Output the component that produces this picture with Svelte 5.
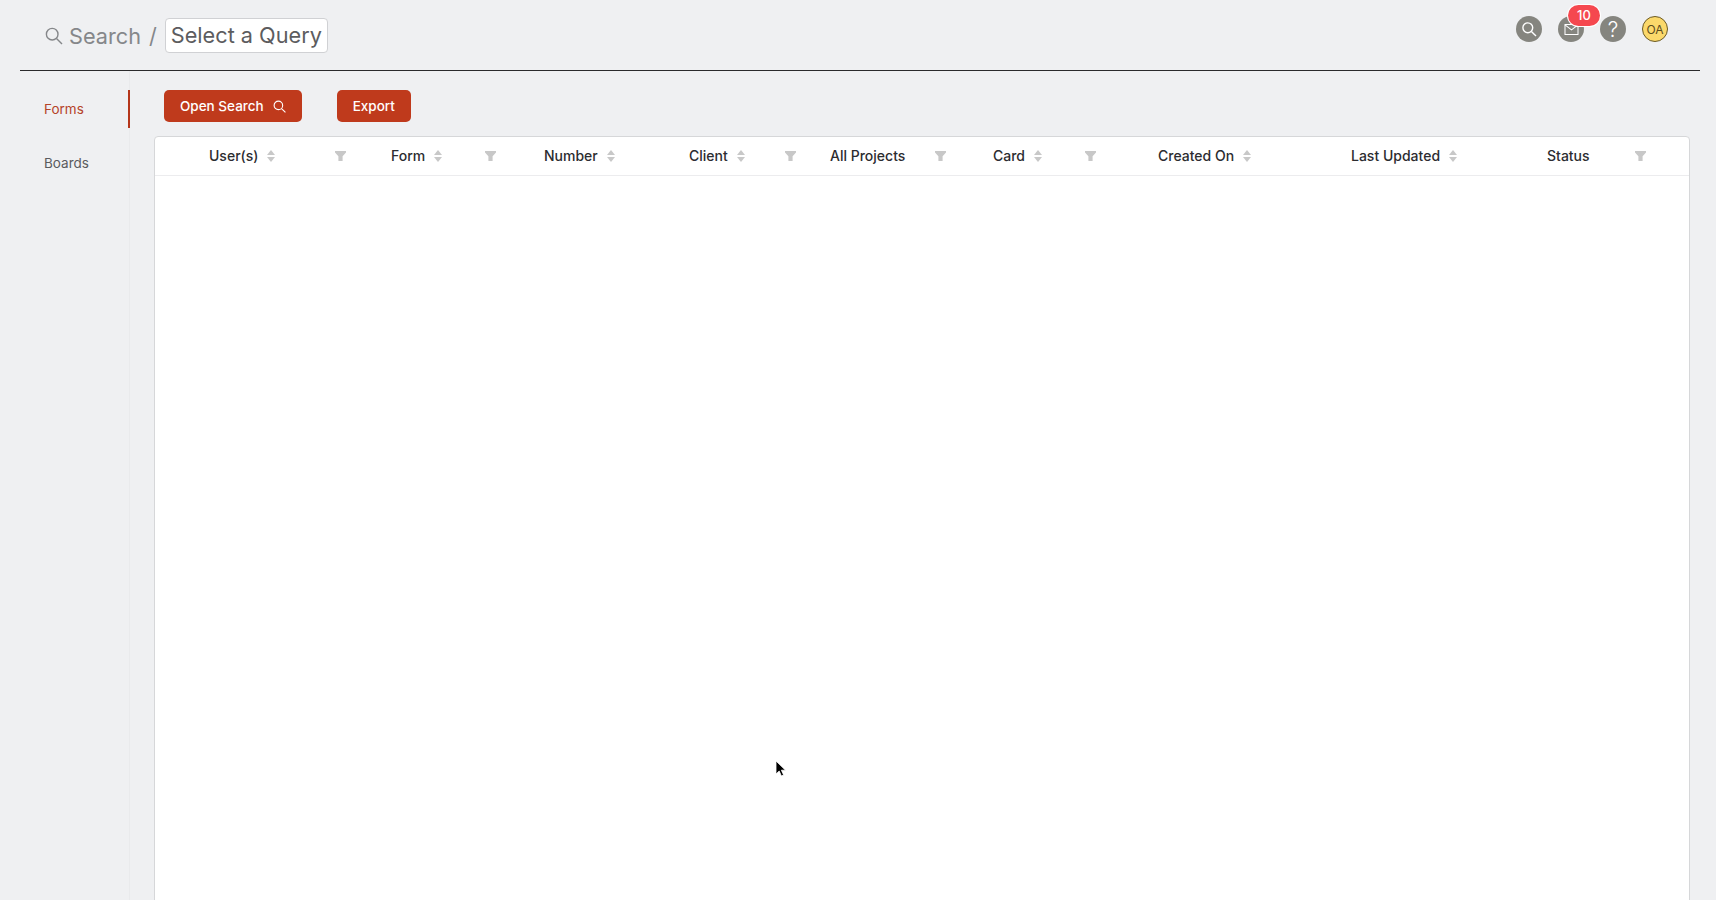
<script lang="ts">
	// width = cell ends at filter icon's right edge, pad = where the title starts
	const columns = [
		{ name: 'User(s)', width: 191, pad: 54, sort: true, filter: true },
		{ name: 'Form', width: 150, pad: 45, sort: true, filter: true },
		{ name: 'Number', width: 176, pad: 48, sort: true, filter: false },
		{ name: 'Client', width: 124, pad: 17, sort: true, filter: true },
		{ name: 'All Projects', width: 150, pad: 34, sort: false, filter: true },
		{ name: 'Card', width: 150, pad: 47, sort: true, filter: true },
		{ name: 'Created On', width: 224, pad: 62, sort: true, filter: false },
		{ name: 'Last Updated', width: 180, pad: 31, sort: true, filter: false },
		{ name: 'Status', width: 146, pad: 47, sort: false, filter: true }
	];
</script>

<div class="page">
	<header class="topbar">
		<div class="crumbs">
			<svg class="crumb-icon" viewBox="0 0 18 18" width="18" height="18" fill="none" stroke="#85878a" stroke-width="1.4">
				<circle cx="7.2" cy="7.2" r="5.8" />
				<path d="M11.5 11.5L17 17" />
			</svg>
			<span class="crumb">Search</span>
			<span class="slash">/</span>
			<span class="query">Select a Query</span>
		</div>
		<div class="actions">
			<span class="round">
				<svg viewBox="0 0 16 16" width="16" height="16" fill="none" stroke="#fff" stroke-width="1.4">
					<circle cx="6.8" cy="6.8" r="4.9" />
					<path d="M10.4 10.4L15 15" />
				</svg>
			</span>
			<span class="round mail">
				<svg viewBox="0 0 16 14" width="15" height="13" fill="none" stroke="#fff" stroke-width="1.1">
					<path d="M1 1.5h14v11H1z" />
					<path d="M1 2l7 5.5L15 2" />
				</svg>
				<span class="badge">10</span>
			</span>
			<span class="round help">?</span>
			<span class="avatar">OA</span>
		</div>
	</header>

	<div class="body">
		<nav class="side">
			<a class="side-item active" href="#forms">Forms</a>
			<a class="side-item" href="#boards">Boards</a>
		</nav>
		<main class="content">
			<div class="toolbar">
				<button class="btn">
					Open Search
					<svg viewBox="0 0 14 14" width="13" height="13" fill="none" stroke="#fff" stroke-width="1.2">
						<circle cx="5.8" cy="5.8" r="4.6" />
						<path d="M9.2 9.2L13.4 13.4" />
					</svg>
				</button>
				<button class="btn">Export</button>
			</div>
			<section class="card">
				<div class="head">
					{#each columns as col}
						<div class="cell" style="width: {col.width}px; padding-left: {col.pad}px">
							<span class="title">{col.name}</span>
							{#if col.sort}
								<svg class="sort" viewBox="0 0 8 12" width="8" height="12" fill="#c8c8c8">
									<path d="M4 0L8 5H0z" />
									<path d="M4 12L0 7h8z" />
								</svg>
							{/if}
							{#if col.filter}
								<svg class="filter" viewBox="0 0 11 10" width="11" height="10" fill="#c8c8c8">
									<path d="M0 0h11v1.6L7.6 5.2V10H3.4V5.2L0 1.6z" />
								</svg>
							{/if}
						</div>
					{/each}
				</div>
			</section>
		</main>
	</div>

	<svg class="cursor" viewBox="0 0 12 18" width="12" height="18">
		<path d="M1 1v13l3.2-3 2.2 5 2.2-1-2.2-4.8H10.5z" fill="#000" stroke="#fff" stroke-width="0.8" />
	</svg>
</div>

<style>
	:global(body) {
		margin: 0;
		background: #eff0f2;
		font-family: Inter, 'Noto Sans', sans-serif;
	}

	.page {
		position: relative;
		height: 900px;
		overflow: hidden;
		background: #eff0f2;
	}

	.topbar {
		display: flex;
		justify-content: space-between;
		height: 70px;
		margin: 0 16px 0 20px;
		border-bottom: 1px solid #2a2a2c;
	}

	.crumbs {
		display: flex;
		align-items: center;
		height: 71px;
		padding-left: 25px;
	}

	.crumb-icon {
		margin-right: 6px;
	}

	.crumb {
		font-size: 21.7px;
		color: #85878a;
	}

	.slash {
		margin: 0 8px 0 8px;
		font-size: 21.7px;
		color: #85878a;
	}

	.query {
		padding: 0 5px;
		height: 33px;
		line-height: 33px;
		font-size: 21.7px;
		color: #5c5c5e;
		background: #fff;
		border: 1px solid #d0d1d4;
		border-radius: 4px;
	}

	.actions {
		display: flex;
		gap: 16px;
		padding: 16px 32px 0 0;
	}

	.round,
	.avatar {
		position: relative;
		display: flex;
		align-items: center;
		justify-content: center;
		width: 26px;
		height: 26px;
		box-sizing: border-box;
		border-radius: 50%;
	}

	.round {
		background: #85857f;
		color: #fff;
	}

	.help {
		font-size: 21px;
		font-weight: 300;
	}

	.avatar {
		background: #fbd96b;
		border: 1px solid #6b5a25;
		font-size: 12px;
		color: #5c4d1e;
	}

	.badge {
		position: absolute;
		top: -11px;
		left: 10px;
		width: 32px;
		height: 21px;
		line-height: 21px;
		text-align: center;
		font-size: 13px;
		font-weight: 500;
		color: #fff;
		background: #f5484f;
		border-radius: 11px;
		box-shadow: 0 0 0 1px #fff;
	}

	.body {
		display: flex;
		height: 829px;
	}

	.side {
		flex: none;
		width: 130px;
		padding-top: 19px;
		box-sizing: border-box;
		border-right: 1px solid #e9eaec;
	}

	.side-item {
		display: block;
		height: 38px;
		line-height: 38px;
		margin-bottom: 16px;
		padding-left: 44px;
		font-size: 13.5px;
		color: #5a5b5e;
		text-decoration: none;
	}

	.side-item.active {
		color: #b5432a;
		border-right: 2px solid #b5361a;
		margin-right: -1px;
	}

	.content {
		flex: 1;
		min-width: 0;
		padding: 19px 26px 0 24px;
	}

	.toolbar {
		display: flex;
		gap: 35px;
		margin-left: 10px;
	}

	.btn {
		display: flex;
		align-items: center;
		gap: 9px;
		height: 32px;
		padding: 0 16px;
		font-family: inherit;
		font-size: 13.5px;
		font-weight: 500;
		color: #fff;
		background: #bf3a1c;
		border: none;
		border-radius: 5px;
	}

	.card {
		height: 800px;
		margin-top: 14px;
		background: #fff;
		border: 1px solid #d6d7d9;
		border-radius: 4px;
	}

	.head {
		display: flex;
		height: 38px;
		border-bottom: 1px solid #ececee;
	}

	.cell {
		display: flex;
		align-items: center;
		flex: none;
		box-sizing: border-box;
	}

	.title {
		position: relative;
		top: -1px;
		font-size: 14px;
		font-weight: 450;
		color: #2c2c30;
	}

	.sort {
		margin-left: 9px;
	}

	.filter {
		margin-left: auto;
	}

	.cursor {
		position: absolute;
		left: 775px;
		top: 760px;
	}
</style>
